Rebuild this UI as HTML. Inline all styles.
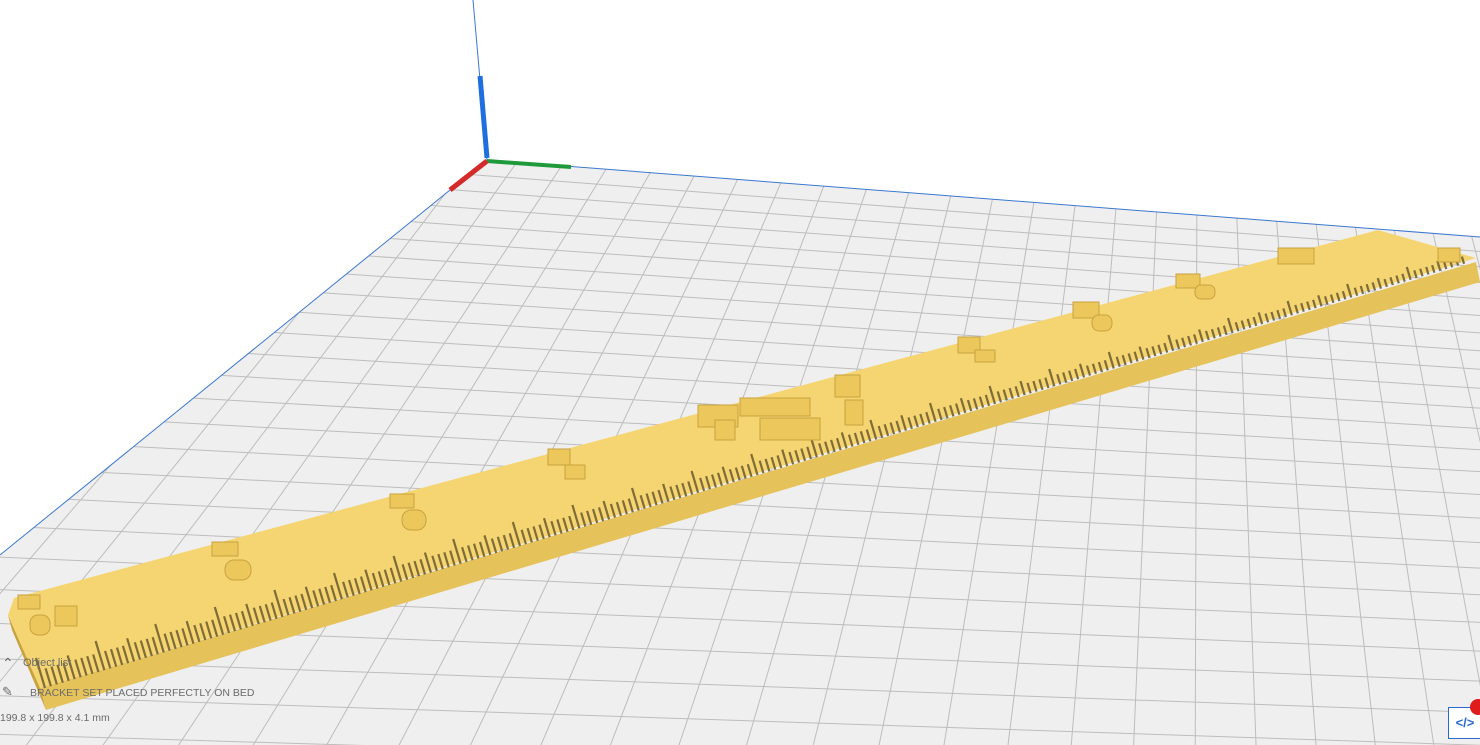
<!DOCTYPE html>
<html><head><meta charset="utf-8"><style>
html,body{margin:0;padding:0;width:1480px;height:745px;overflow:hidden;background:#fff;font-family:"Liberation Sans",sans-serif}
svg{position:absolute;left:0;top:0}
.t{position:absolute;color:#6b6b6b;font-size:11px;white-space:nowrap}
</style></head><body>
<svg id="s" width="1480" height="745" viewBox="0 0 1480 745">
<defs><clipPath id="cp"><polygon points="487,160 1480,237 1480,745 0,745 0,555"/></clipPath></defs>
<polygon points="487,160 1480,237 1480,745 0,745 0,555" fill="#efefef"/>
<g id="grid" stroke="#bdbdbd" stroke-width="1" fill="none" clip-path="url(#cp)"></g>
<line x1="487" y1="160" x2="1480" y2="237" stroke="#3b78d0" stroke-width="1"/>
<line x1="487" y1="160" x2="0" y2="555" stroke="#3b78d0" stroke-width="1"/>
<line x1="487" y1="160" x2="473" y2="0" stroke="#3b78d0" stroke-width="1"/>
<line x1="487" y1="158" x2="480" y2="76" stroke="#1f6fe0" stroke-width="5"/>
<line x1="487" y1="161" x2="571" y2="167" stroke="#1e9a3a" stroke-width="4"/>
<line x1="487" y1="161" x2="450" y2="190" stroke="#d42a2a" stroke-width="5"/>
<polygon points="40,688 1476,262 1480,282 46,710" fill="#e6c25a"/>
<polygon points="8,615 14,598 1378,230 1476,258 40,688" fill="#f5d572"/>
<polygon points="8,615 40,688 46,710 12,630" fill="#c9a23e"/>
<g id="teeth" stroke="#7f6c36" stroke-width="2.2"></g>
<g fill="#ecc85c" stroke="#c9a23e" stroke-width="1">
<rect x="18" y="595" width="22" height="14"/><rect x="30" y="615" width="20" height="20" rx="8"/><rect x="55" y="606" width="22" height="20"/>
<rect x="212" y="542" width="26" height="14"/><rect x="225" y="560" width="26" height="20" rx="9"/>
<rect x="390" y="494" width="24" height="14"/><rect x="402" y="510" width="24" height="20" rx="9"/>
<rect x="548" y="449" width="22" height="16"/><rect x="565" y="465" width="20" height="14"/>
<rect x="698" y="405" width="40" height="22"/><rect x="715" y="420" width="20" height="20"/><rect x="740" y="398" width="70" height="18"/><rect x="760" y="418" width="60" height="22"/><rect x="835" y="375" width="25" height="22"/><rect x="845" y="400" width="18" height="25"/>
<rect x="958" y="337" width="22" height="16"/><rect x="975" y="350" width="20" height="12"/>
<rect x="1073" y="302" width="26" height="16"/><rect x="1092" y="315" width="20" height="16" rx="7"/>
<rect x="1176" y="274" width="24" height="14"/><rect x="1195" y="285" width="20" height="14" rx="6"/>
<rect x="1278" y="248" width="36" height="16"/>
<rect x="1438" y="248" width="22" height="14"/>
</g>
</svg>
<div class="t" style="left:2px;top:655px;font-size:14px">⌃</div>
<div class="t" style="left:23px;top:657px">Object list</div>
<div class="t" style="left:2px;top:684px;font-size:13px">✎</div>
<div class="t" style="left:30px;top:687px;font-size:10.5px">BRACKET SET PLACED PERFECTLY ON BED</div>
<div class="t" style="left:0;top:712px;font-size:10.5px">199.8 x 199.8 x 4.1 mm</div>
<div style="position:absolute;left:1448px;top:707px;width:32px;height:30px;border:1px solid #2b6ad0;background:#fff;color:#2b6ad0;font-size:13px;font-weight:bold;text-align:center;line-height:30px">&lt;/&gt;</div>
<div style="position:absolute;left:1470px;top:699px;width:16px;height:16px;border-radius:50%;background:#e01b1b"></div>
<script>
(function(){
var O=[517,162],Vu=[13000,1130],Vv=[1200,-800],al=0.0036,be=-0.0156;
function m(u,v){var a=al*u,b=be*v,w=1+a+b;return [(O[0]+a*Vu[0]+b*Vv[0])/w,(O[1]+a*Vu[1]+b*Vv[1])/w];}
var s='';
for(var i=-6;i<=26;i++){var p=m(i,-1),q=m(i,30);s+='<line x1="'+p[0]+'" y1="'+p[1]+'" x2="'+q[0]+'" y2="'+q[1]+'"/>';}
for(var j=0;j<=30;j++){var p2=m(-6,j),q2=m(26,j);s+='<line x1="'+p2[0]+'" y1="'+p2[1]+'" x2="'+q2[0]+'" y2="'+q2[1]+'"/>';}
document.getElementById('grid').innerHTML=s;
var t='';for(var k=0;k<240;k++){var r=k/240;var bx=45+r*1425,by=688-r*426;var L=(k%10==0?30:(k%5==0?24:18))*(1-r*0.6);
t+='<line x1="'+bx+'" y1="'+by+'" x2="'+(bx-L*0.3)+'" y2="'+(by-L)+'"/>';}
document.getElementById('teeth').innerHTML=t;
})();
</script>
</body></html>
